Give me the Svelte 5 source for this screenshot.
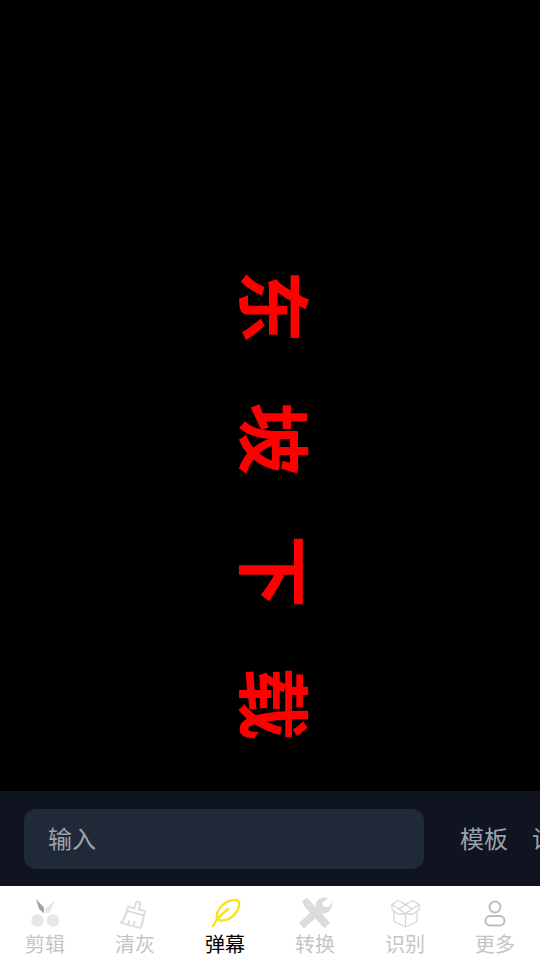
<script>
  let text = $state("");
</script>

<div class="page">
  <div class="stage">
    <div class="danmu">东坡下载</div>
  </div>

  <div class="input-bar">
    <input class="field" placeholder="输入" bind:value={text} />
    <span class="action">模板</span>
    <span class="action">设置</span>
  </div>

  <nav class="tabs">
    <div class="tab">
      <svg viewBox="0 0 36 36">
        <path d="M9 4 L17 12.5 L17 18.5 L12 14 Z" fill="#a3a3a3" />
        <path d="M28.5 5 L21.5 19 L18 17 L19 13 Z" fill="#e6e6e6" />
        <circle cx="10.5" cy="25.5" r="6.2" fill="#e6e6e6" />
        <circle cx="26" cy="25.5" r="6.2" fill="#e6e6e6" />
      </svg>
      <span>剪辑</span>
    </div>
    <div class="tab">
      <svg viewBox="0 0 36 36">
        <g transform="rotate(15 18 18) translate(1.5 3) scale(.92 .88)" fill="none" stroke="#dcdcdc" stroke-width="2.2" stroke-linejoin="round">
          <path d="M16 12 V5 Q18.5 2 21 5 V12 H28 V17 H9 V12 Z" />
          <path d="M9 17 Q9 26 6 32 H28 Q29 24 28 17" />
          <path d="M14 32 V27 M20 32 V26" />
        </g>
      </svg>
      <span>清灰</span>
    </div>
    <div class="tab active">
      <svg viewBox="0 0 36 36">
        <g fill="none" stroke="#f4e61e" stroke-width="2.4" stroke-linecap="round" stroke-linejoin="round">
          <path d="M10 24 C8 14 19 5 28 5 C33 5 33 10 31 14 C27 23 17 28 10 24 Z" />
          <path d="M6 31 L10 24 L21 14" />
        </g>
      </svg>
      <span>弹幕</span>
    </div>
    <div class="tab">
      <svg viewBox="0 0 36 36">
        <path d="M5 6 L10 3 L29 23 L33 28 L28 33 L24 30 L7 11 Z" fill="#dcdcdc" />
        <path d="M7 33.5 L2 28 L19 12 C17 6 24 1 31 3 L25 8 L27 12 L32 12 L35 7 C36 15 30 20 24 18 Z" fill="#dcdcdc" />
      </svg>
      <span>转换</span>
    </div>
    <div class="tab">
      <svg viewBox="0 0 36 36">
        <g fill="none" stroke="#d6d6d6" stroke-width="1.3" stroke-linejoin="round">
          <path d="M18.5 9.5 L11 5.5 L5 9.5 L12 14 L18.5 9.5 L26 5.5 L32 9.5 L25 14 Z" />
          <path d="M12 14 L18.5 18.5 L25 14" />
          <path d="M5 9.5 V15 L12 19.5 L18.5 18.5 L25 19.5 L32 15 V9.5" />
          <path d="M7 17 V26.5 L18.5 32 L30 26.5 V17 M18.5 18.5 V32" />
        </g>
      </svg>
      <span>识别</span>
    </div>
    <div class="tab">
      <svg viewBox="0 0 36 36">
        <g fill="none" stroke="#bdbdbd" stroke-width="2">
          <circle cx="18" cy="12" r="5.5" />
          <rect x="8.5" y="21" width="19" height="9.5" rx="4.75" />
        </g>
      </svg>
      <span>更多</span>
    </div>
  </nav>
</div>

<style>
  :global(body) {
    margin: 0;
    background: #000;
  }

  .page {
    width: 540px;
    height: 960px;
    display: flex;
    flex-direction: column;
    overflow: hidden;
    font-family: "Noto Sans CJK SC", "Noto Sans", sans-serif;
  }

  .stage {
    flex: 1;
    background: #000;
    display: flex;
    justify-content: center;
    padding-top: 270px;
    box-sizing: border-box;
    min-height: 0;
  }

  .danmu {
    writing-mode: vertical-rl;
    text-orientation: sideways;
    color: #f00;
    font-size: 73px;
    font-weight: 700;
    line-height: 73px;
    letter-spacing: 59.5px;
    white-space: nowrap;
    height: 530px;
    margin-left: 15px;
  }

  .input-bar {
    height: 95px;
    flex: none;
    background: #0f1420;
    display: flex;
    align-items: center;
    padding: 0 0 2px 24px;
    box-sizing: border-box;
    overflow: hidden;
    color: #9ca3af;
    font-size: 24px;
  }

  .field {
    flex: none;
    width: 400px;
    height: 60px;
    box-sizing: border-box;
    padding: 0 24px 2px;
    border: 0;
    border-radius: 12px;
    background: #1f2937;
    color: #e5e7eb;
    font: inherit;
    outline: none;
    margin: 2px 36px 0 0;
  }

  .field::placeholder {
    color: #9ca3af;
    opacity: 1;
  }

  .action {
    flex: none;
    margin-right: 24px;
    white-space: nowrap;
  }

  .tabs {
    height: 74px;
    flex: none;
    background: #fff;
    display: grid;
    grid-template-columns: repeat(6, 90px);
  }

  .tab {
    display: flex;
    flex-direction: column;
    align-items: center;
    padding-top: 9px;
    color: #c4c4c4;
    font-size: 20px;
    line-height: 28px;
  }

  .tab svg {
    width: 36px;
    height: 36px;
    margin-bottom: -1px;
    display: block;
  }

  .tab.active {
    color: #000;
  }
</style>
